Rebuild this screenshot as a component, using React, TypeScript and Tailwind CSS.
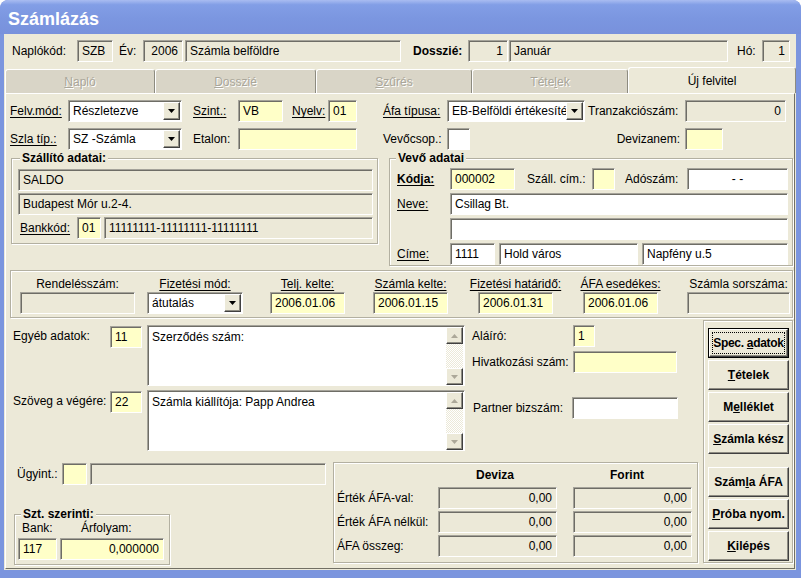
import React from 'react';

// Windows XP-ish 3D edges
const sunken =
  'border border-t-[#a5a39a] border-l-[#a5a39a] border-b-white border-r-white shadow-[inset_1px_1px_0_#6e6d66]';
const raised =
  'bg-[#ece9d8] border border-t-white border-l-white border-b-[#404040] border-r-[#404040] shadow-[inset_-1px_-1px_0_#8e8c82]';
const etched = 'border border-[#b3b0a1] shadow-[inset_1px_1px_0_#fff,1px_1px_0_#fff]';
const U = 'underline underline-offset-[2px]';

type Tone = 'g' | 'y' | 'w';

function Field({
  w,
  tone = 'g',
  right,
  center,
  c = '',
  children,
}: {
  w: string;
  tone?: Tone;
  right?: boolean;
  center?: boolean;
  c?: string;
  children?: React.ReactNode;
}) {
  const bg = tone === 'y' ? 'bg-[#ffffc8]' : tone === 'w' ? 'bg-white' : 'bg-[#ece9d8]';
  const al = right ? 'justify-end pr-[4px]' : center ? 'justify-center' : 'pl-[4px]';
  return (
    <div
      className={`${w} h-[22px] ${bg} ${sunken} ${al} ${c} flex items-center shrink-0 overflow-hidden whitespace-nowrap leading-[20px]`}
    >
      {children}
    </div>
  );
}

function L({ c = '', children }: { c?: string; children: React.ReactNode }) {
  return <span className={`shrink-0 whitespace-nowrap leading-[14px] ${c}`}>{children}</span>;
}

function Tri() {
  return (
    <svg width="7" height="4" viewBox="0 0 7 4">
      <polygon points="0,0 7,0 3.5,4" fill="#000" />
    </svg>
  );
}

function Select({ w, children }: { w: string; children: React.ReactNode }) {
  return (
    <div className={`${w} h-[22px] bg-white ${sunken} flex items-center shrink-0`}>
      <div className="flex-1 min-w-0 pl-[4px] overflow-hidden whitespace-nowrap leading-[20px]">{children}</div>
      <div className={`w-[17px] h-[18px] mr-[1px] shrink-0 ${raised} flex items-center justify-center`}>
        <Tri />
      </div>
    </div>
  );
}

function ScrollBtn({ up }: { up?: boolean }) {
  return (
    <div className={`w-[17px] h-[17px] shrink-0 ${raised} flex items-center justify-center`}>
      <svg width="7" height="4" viewBox="0 0 7 4" className={up ? 'rotate-180' : ''}>
        <polygon points="0,0 7,0 3.5,4" fill="#aca899" />
      </svg>
    </div>
  );
}

function TextArea({ children }: { children: React.ReactNode }) {
  return (
    <div className={`ml-[5px] w-[318px] h-[61px] bg-white ${sunken} flex shrink-0`}>
      <div className="flex-1 pl-[4px] pt-[4px] leading-[14px] whitespace-nowrap">{children}</div>
      <div className="w-[17px] flex flex-col pt-[1px] mr-[1px]">
        <ScrollBtn up />
        <div className="flex-1 bg-[image:repeating-conic-gradient(#ece9d8_0%_25%,#ffffff_0%_50%)] bg-[length:2px_2px]" />
        <ScrollBtn />
      </div>
    </div>
  );
}

function Btn({ children, focused }: { children: React.ReactNode; focused?: boolean }) {
  if (focused) {
    return (
      <div className="w-[81px] h-[30px] border border-black flex shrink-0">
        <div className={`flex-1 ${raised} flex p-[2px]`}>
          <div className="flex-1 border border-dotted border-black flex items-center justify-center font-bold whitespace-nowrap tracking-[-0.3px]">
            <span>{children}</span>
          </div>
        </div>
      </div>
    );
  }
  return (
    <div className={`w-[81px] h-[30px] ${raised} flex items-center justify-center font-bold whitespace-nowrap shrink-0`}>
      <span>{children}</span>
    </div>
  );
}

function Tab({ w, children }: { w: string; children: React.ReactNode }) {
  return (
    <div
      className={`${w} h-[24px] shrink-0 bg-[#d9d5c7] border-t border-l border-white border-r border-r-[#8d8b80] rounded-t-[3px] flex items-center justify-center text-[#a9a69a] [text-shadow:1px_1px_0_#ffffff]`}
    >
      <span>{children}</span>
    </div>
  );
}

export default function App() {
  return (
    <div className="w-[801px] h-[578px] bg-[#7b95de] rounded-t-[8px] flex flex-col overflow-hidden font-['Liberation_Sans',Arial,sans-serif] text-[12px] text-black">
      {/* title bar */}
      <div className="h-[34px] shrink-0 rounded-t-[8px] bg-[linear-gradient(to_bottom,#a9bcf1_0%,#829ee6_14%,#7b96e0_55%,#7891dc_100%)] flex items-center pl-[8px] pt-[3px]">
        <span className="text-white font-bold text-[18px] leading-none">Számlázás</span>
      </div>

      <div className="flex-1 ml-[4px] mr-[5px] mb-[8px] bg-[#ece9d8] flex flex-col">
        {/* header row */}
        <div className="mt-[6px] h-[22px] flex items-center">
          <L c="ml-[8px] w-[65px]">Naplókód:</L>
          <Field w="w-[36px]">SZB</Field>
          <L c="w-[30px] pl-[6px]">Év:</L>
          <Field w="w-[40px]" right>
            2006
          </Field>
          <Field w="w-[216px]" c="ml-[2px]">
            Számla belföldre
          </Field>
          <L c="w-[67px] pl-[12px] font-bold">Dosszié:</L>
          <Field w="w-[40px]" right>
            1
          </Field>
          <Field w="w-[219px]" c="ml-[1px]">
            Január
          </Field>
          <L c="w-[34px] pl-[9px]">Hó:</L>
          <Field w="w-[28px]" right>
            1
          </Field>
        </div>

        {/* tabs */}
        <div className="mt-[5px] h-[26px] flex items-end ml-[1px]">
          <Tab w="w-[150px]">
            <span className="underline">N</span>apló
          </Tab>
          <Tab w="w-[161px]">
            <span className="underline">D</span>osszié
          </Tab>
          <Tab w="w-[156px]">
            <span className="underline">S</span>zűrés
          </Tab>
          <Tab w="w-[156px]">
            Téte<span className="underline">l</span>ek
          </Tab>
          <div className="w-[168px] h-[26px] shrink-0 bg-[#ece9d8] border-t border-l border-white border-r border-r-[#8d8b80] rounded-t-[3px] flex items-center justify-center">
            Új felvitel
          </div>
        </div>

        {/* tab panel */}
        <div className="flex-1 ml-[1px] w-[790px] mb-[1px] border border-t-white border-l-white border-r-[#716f64] border-b-[#716f64] flex flex-col">
          {/* row 1 */}
          <div className="mt-[6px] h-[22px] flex items-center">
            <L c={`ml-[4px] w-[58px] ${U}`}>Felv.mód:</L>
            <Select w="w-[114px]">Részletezve</Select>
            <L c="w-[56px] pl-[11px]">
              <span className={U}>Szint.:</span>
            </L>
            <Field w="w-[45px]" tone="y">
              VB
            </Field>
            <L c="w-[45px] pl-[9px]">
              <span className={U}>Nyelv:</span>
            </L>
            <Field w="w-[29px]" tone="y">
              01
            </Field>
            <L c="w-[90px] pl-[26px]">
              <span className={U}>Áfa típusa:</span>
            </L>
            <Select w="w-[138px]">EB-Belföldi értékesítés</Select>
            <L c="w-[100px] pl-[3px]">Tranzakciószám:</L>
            <Field w="w-[101px]" right>
              0
            </Field>
          </div>

          {/* row 2 */}
          <div className="mt-[6px] h-[22px] flex items-center">
            <L c={`ml-[4px] w-[58px] ${U}`}>Szla típ.:</L>
            <Select w="w-[114px]">SZ -Számla</Select>
            <L c="w-[56px] pl-[11px]">Etalon:</L>
            <Field w="w-[119px]" tone="y" />
            <L c="w-[90px] pl-[26px]">Vevőcsop.:</L>
            <Field w="w-[23px]" tone="w" />
            <L c="w-[215px] text-right pr-[5px]">Devizanem:</L>
            <Field w="w-[38px]" tone="y" />
          </div>

          {/* partner groups */}
          <div className="mt-[1px] flex items-start">
            <fieldset className={`ml-[5px] w-[367px] h-[93px] ${etched} shrink-0`}>
              <legend className="ml-[8px] px-[2px] font-bold leading-[14px] bg-[#ece9d8]">Szállító adatai:</legend>
              <div className="flex flex-col pl-[6px] pt-[4px] gap-[2px]">
                <Field w="w-[355px]">SALDO</Field>
                <Field w="w-[355px]">Budapest Mór u.2-4.</Field>
                <div className="flex items-center">
                  <L c="w-[59px] pl-[2px]">
                    <span className={U}>Bankkód:</span>
                  </L>
                  <Field w="w-[24px]" tone="y">
                    01
                  </Field>
                  <Field w="w-[269px]" c="ml-[3px]">
                    11111111-11111111-11111111
                  </Field>
                </div>
              </div>
            </fieldset>

            <fieldset className={`ml-[11px] w-[404px] h-[115px] ${etched} shrink-0`}>
              <legend className="ml-[6px] px-[2px] font-bold leading-[14px] bg-[#ece9d8]">Vevő adatai</legend>
              <div className="flex flex-col pt-[3px] gap-[3px]">
                <div className="flex items-center">
                  <L c="w-[60px] pl-[7px] font-bold">
                    <span className={U}>Kódja:</span>
                  </L>
                  <Field w="w-[65px]" tone="y">
                    000002
                  </Field>
                  <L c="w-[77px] pl-[12px]">Száll. cím.:</L>
                  <Field w="w-[23px]" tone="y" />
                  <L c="w-[72px] pl-[10px]">Adószám:</L>
                  <Field w="w-[101px]" tone="w" center>
                    - -
                  </Field>
                </div>
                <div className="flex items-center">
                  <L c="w-[60px] pl-[7px]">
                    <span className={U}>Neve:</span>
                  </L>
                  <Field w="w-[338px]" tone="w">
                    Csillag Bt.
                  </Field>
                </div>
                <div className="flex items-center">
                  <Field w="w-[338px]" tone="w" c="ml-[60px]" />
                </div>
                <div className="flex items-center">
                  <L c="w-[60px] pl-[7px]">
                    <span className={U}>Címe:</span>
                  </L>
                  <Field w="w-[45px]" tone="w">
                    1111
                  </Field>
                  <Field w="w-[139px]" tone="w" c="ml-[4px]">
                    Hold város
                  </Field>
                  <Field w="w-[146px]" tone="w" c="ml-[4px]">
                    Napfény u.5
                  </Field>
                </div>
              </div>
            </fieldset>
          </div>

          {/* dates */}
          <div className={`mt-[4px] ml-[4px] w-[783px] h-[48px] ${etched} flex items-start pt-[6px] shrink-0`}>
            <div className="ml-[9px] w-[115px] flex flex-col items-center shrink-0">
              <L>Rendelésszám:</L>
              <Field w="w-[115px]" c="mt-[1px]" />
            </div>
            <div className="ml-[12px] w-[96px] flex flex-col items-center shrink-0">
              <L c={U}>Fizetési mód:</L>
              <div className="mt-[1px]">
                <Select w="w-[96px]">átutalás</Select>
              </div>
            </div>
            <div className="ml-[27px] w-[75px] flex flex-col items-center shrink-0">
              <L c={U}>Telj. kelte:</L>
              <Field w="w-[75px]" tone="y" c="mt-[1px]">
                2006.01.06
              </Field>
            </div>
            <div className="ml-[28px] w-[75px] flex flex-col items-center shrink-0">
              <L c={U}>Számla kelte:</L>
              <Field w="w-[75px]" tone="y" c="mt-[1px]">
                2006.01.15
              </Field>
            </div>
            <div className="ml-[30px] w-[75px] flex flex-col items-center shrink-0">
              <L c={U}>Fizetési határidő:</L>
              <Field w="w-[75px]" tone="y" c="mt-[1px]">
                2006.01.31
              </Field>
            </div>
            <div className="ml-[30px] w-[75px] flex flex-col items-center shrink-0">
              <L c={U}>ÁFA esedékes:</L>
              <Field w="w-[75px]" tone="y" c="mt-[1px]">
                2006.01.06
              </Field>
            </div>
            <div className="ml-[29px] w-[103px] flex flex-col items-center shrink-0">
              <L>Számla sorszáma:</L>
              <Field w="w-[103px]" c="mt-[1px]" />
            </div>
          </div>

          {/* lower area */}
          <div className="mt-[2px] flex">
            <div className="w-[697px] flex flex-col shrink-0">
              <div className="h-[135px] flex">
                <div className="w-[459px] flex flex-col pt-[5px] shrink-0">
                  <div className="flex items-start">
                    <L c="ml-[7px] w-[97px] pt-[4px]">Egyéb adatok:</L>
                    <Field w="w-[32px]" tone="y" c="mt-[1px]">
                      11
                    </Field>
                    <TextArea>Szerződés szám:</TextArea>
                  </div>
                  <div className="mt-[4px] flex items-start">
                    <L c="ml-[7px] w-[97px] pt-[4px]">Szöveg a végére:</L>
                    <Field w="w-[32px]" tone="y" c="mt-[1px]">
                      22
                    </Field>
                    <TextArea>Számla kiállítója: Papp Andrea</TextArea>
                  </div>
                </div>
                <div className="w-[238px] flex flex-col shrink-0">
                  <div className="mt-[5px] flex items-center">
                    <L c="ml-[7px] w-[101px]">Aláíró:</L>
                    <Field w="w-[22px]" tone="y">
                      1
                    </Field>
                  </div>
                  <div className="mt-[4px] flex items-center">
                    <L c="ml-[7px] w-[101px]">Hivatkozási szám:</L>
                    <Field w="w-[104px]" tone="y" />
                  </div>
                  <div className="mt-[24px] flex items-center">
                    <L c="ml-[8px] w-[99px]">Partner bizszám:</L>
                    <Field w="w-[106px]" tone="w" />
                  </div>
                </div>
              </div>

              <div className="flex">
                <div className="w-[327px] flex flex-col shrink-0">
                  <div className="mt-[8px] flex items-center">
                    <L c="ml-[11px] w-[45px]">Ügyint.:</L>
                    <Field w="w-[25px]" tone="y" />
                    <Field w="w-[236px]" c="ml-[3px]" />
                  </div>
                  <fieldset className={`mt-[22px] ml-[8px] w-[156px] h-[58px] ${etched} shrink-0`}>
                    <legend className="ml-[6px] px-[2px] font-bold leading-[14px] bg-[#ece9d8]">Szt. szerinti:</legend>
                    <div className="flex flex-col">
                      <div className="h-[14px] flex items-center">
                        <L c="ml-[7px] w-[59px]">Bank:</L>
                        <L>Árfolyam:</L>
                      </div>
                      <div className="mt-[3px] flex items-center">
                        <Field w="w-[39px]" tone="y" c="ml-[3px]">
                          117
                        </Field>
                        <Field w="w-[104px]" tone="y" right c="ml-[3px]">
                          0,000000
                        </Field>
                      </div>
                    </div>
                  </fieldset>
                </div>

                <div className={`mt-[7px] w-[365px] h-[101px] ${etched} flex flex-col shrink-0`}>
                  <div className="h-[24px] flex items-center font-bold">
                    <div className="ml-[104px] w-[114px] text-center">Deviza</div>
                    <div className="ml-[21px] w-[108px] text-center">Forint</div>
                  </div>
                  <div className="flex flex-col gap-[2px]">
                    {['Érték ÁFA-val:', 'Érték ÁFA nélkül:', 'ÁFA összeg:'].map((t) => (
                      <div key={t} className="flex items-center">
                        <L c="w-[104px] pl-[3px]">{t}</L>
                        <Field w="w-[119px]" right>
                          0,00
                        </Field>
                        <Field w="w-[119px]" right c="ml-[16px]">
                          0,00
                        </Field>
                      </div>
                    ))}
                  </div>
                </div>
              </div>
            </div>

            {/* buttons */}
            <div className={`w-[90px] h-[243px] ${etched} flex flex-col pt-[7px] pl-[4px] gap-[2px] shrink-0`}>
              <Btn focused>
                Spec. <span className="underline">a</span>datok
              </Btn>
              <Btn>
                <span className="underline">T</span>ételek
              </Btn>
              <Btn>
                M<span className="underline">e</span>lléklet
              </Btn>
              <Btn>
                <span className="underline">S</span>zámla kész
              </Btn>
              <div className="h-[9px] shrink-0" />
              <Btn>
                Szám<span className="underline">l</span>a ÁFA
              </Btn>
              <Btn>
                <span className="underline">P</span>róba nyom.
              </Btn>
              <Btn>
                <span className="underline">K</span>ilépés
              </Btn>
            </div>
          </div>
        </div>
      </div>
    </div>
  );
}
